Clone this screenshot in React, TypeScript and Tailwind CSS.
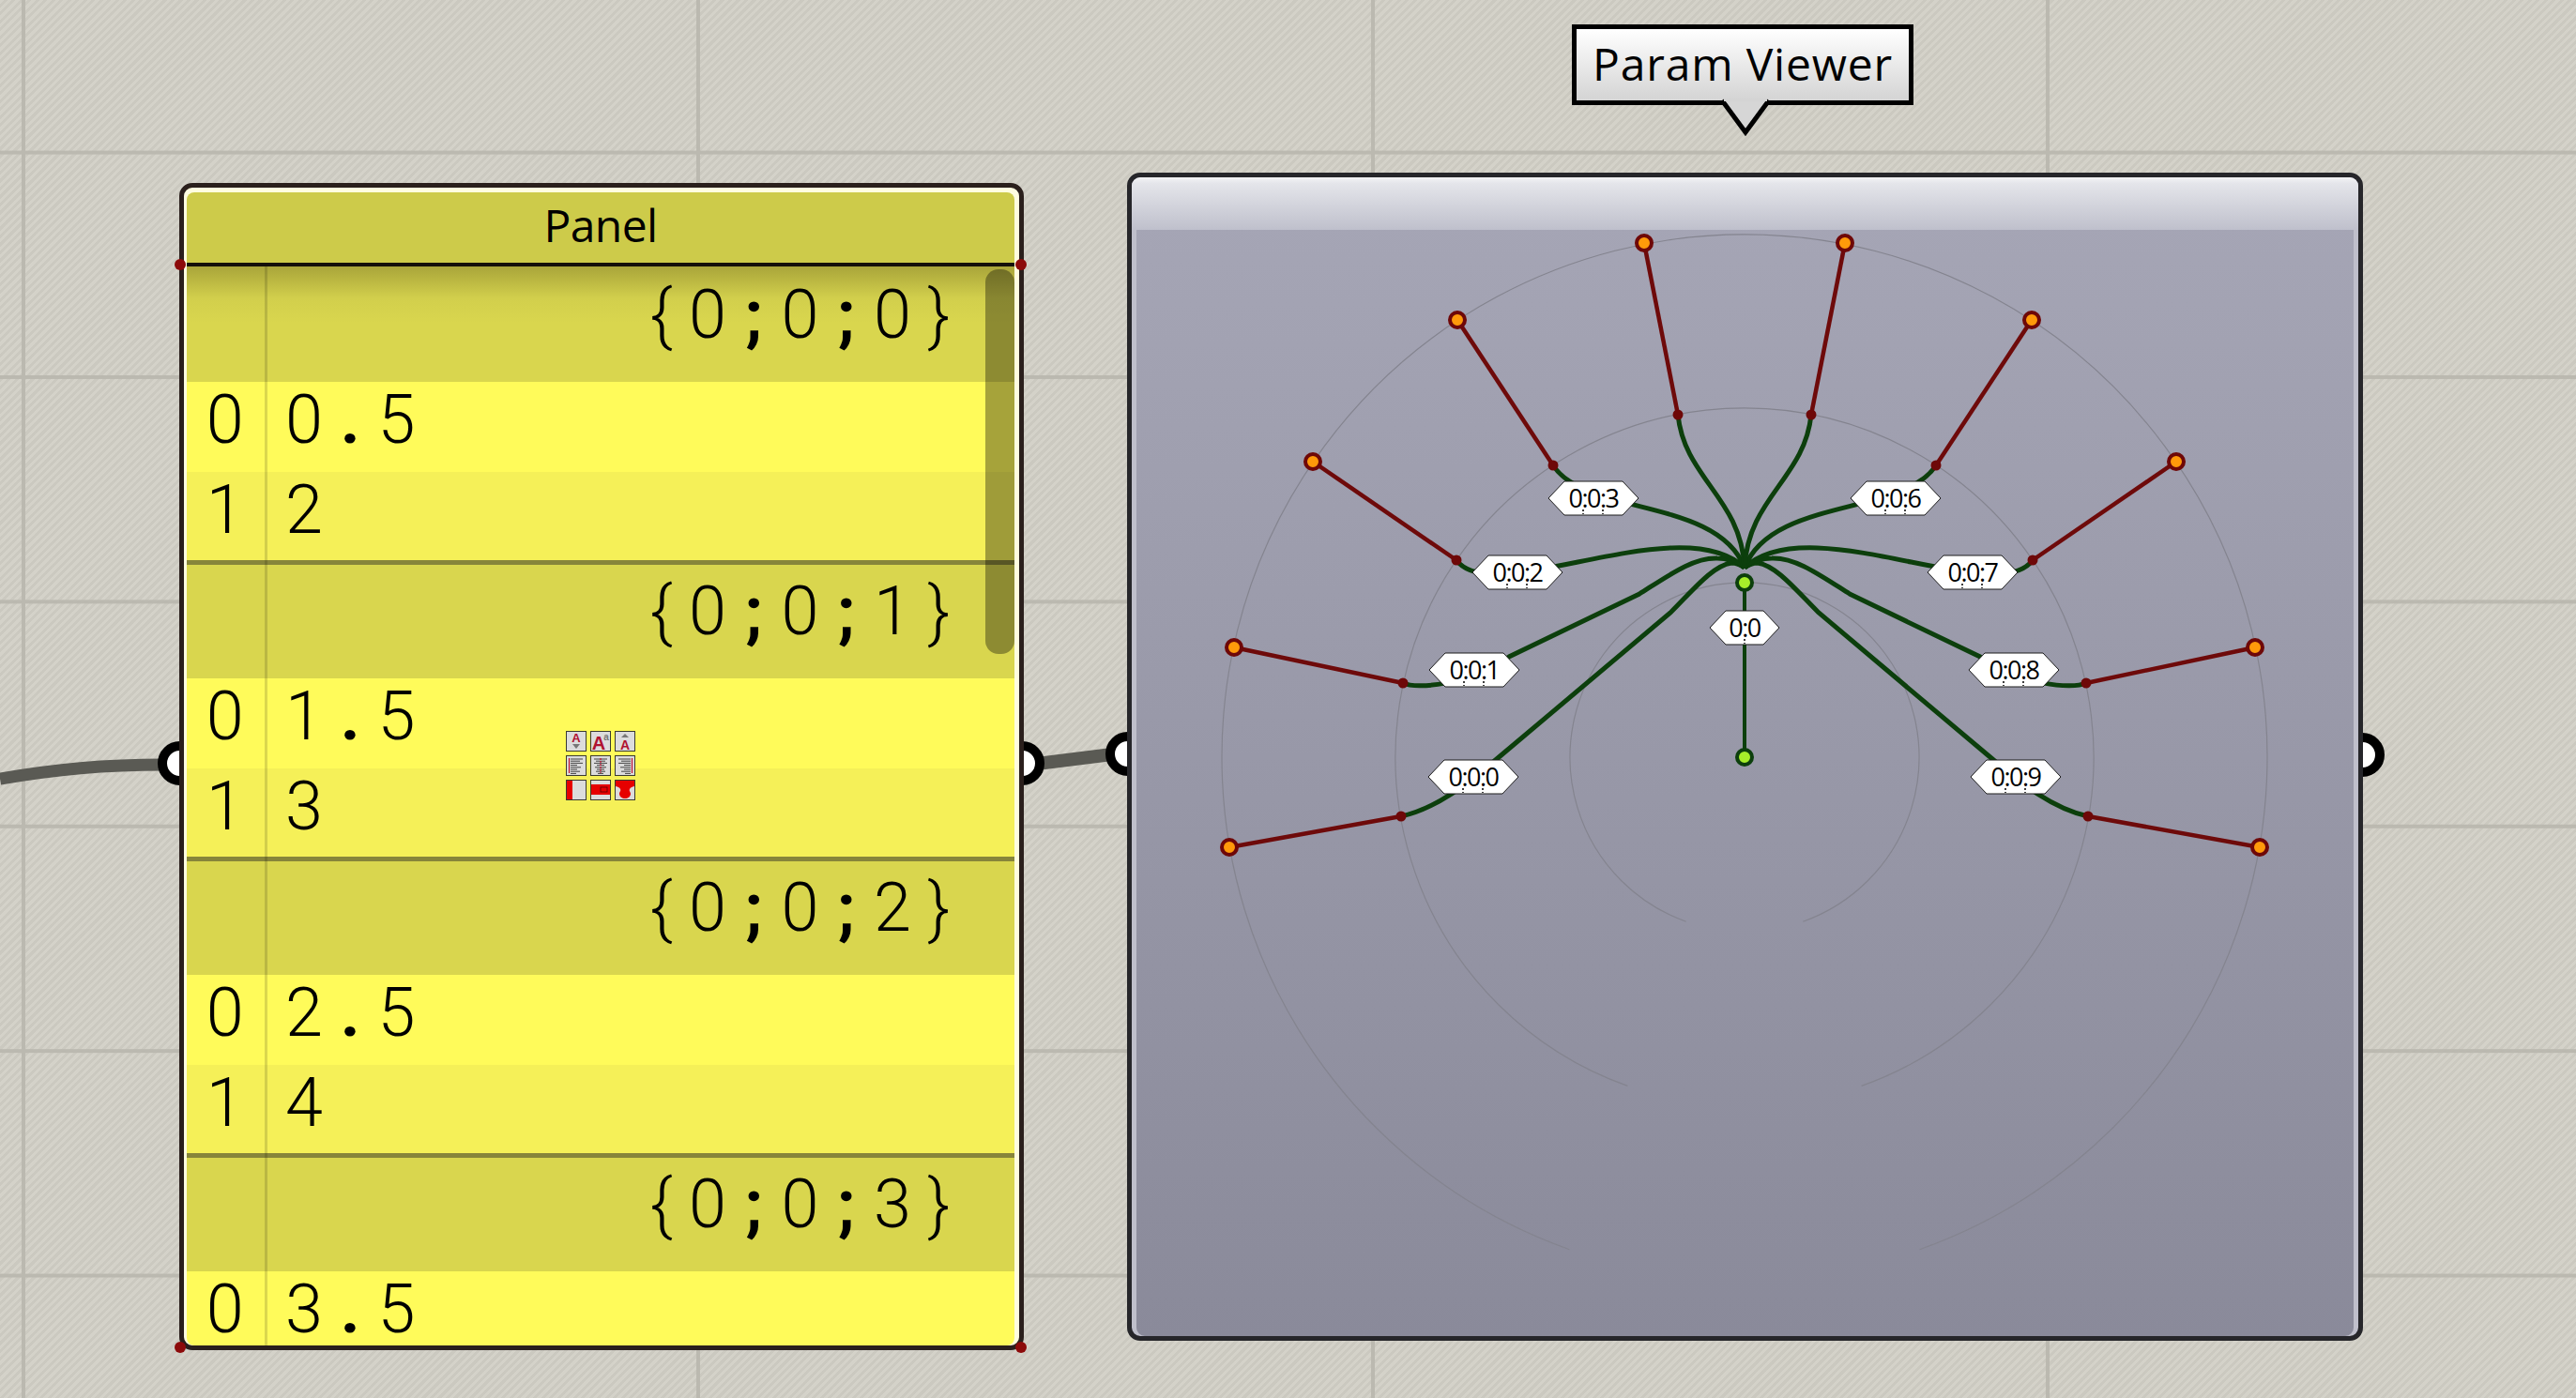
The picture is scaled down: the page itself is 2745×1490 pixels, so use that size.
import React from 'react';

const mono = "font-['Roboto',sans-serif] text-[72px] leading-none text-black";
const uiFont = "font-['Open_Sans','Noto_Sans',sans-serif]";

const treeCenter = { x: 1859, y: 807 };

// left half of the tree, the right half is mirrored around treeCenter.x
const leftBranches = [
  { tip: [1310, 903], joint: [1493, 870], curve: 'C1530 862,1565 835,1596 808L1780 653C1805 628,1825 603,1845 600C1851 600,1855 602,1859 605' },
  { tip: [1315, 690], joint: [1495, 728], curve: 'C1510 735,1565 730,1608 700L1747 633C1780 612,1805 594,1830 595C1842 595,1852 600,1859 605' },
  { tip: [1399, 492], joint: [1552, 597], curve: 'C1590 650,1790 540,1859 605' },
  { tip: [1553, 341], joint: [1655, 496], curve: 'C1690 550,1830 530,1859 605' },
  { tip: [1752, 259], joint: [1788, 442], curve: 'C1795 510,1855 530,1859 605' },
];

const tags = [
  { label: '0:0:0', x: 1570, y: 828 },
  { label: '0:0:1', x: 1571, y: 714 },
  { label: '0:0:2', x: 1617, y: 610 },
  { label: '0:0:3', x: 1698, y: 531 },
  { label: '0:0:6', x: 2020, y: 531 },
  { label: '0:0:7', x: 2102, y: 610 },
  { label: '0:0:8', x: 2146, y: 714 },
  { label: '0:0:9', x: 2148, y: 828 },
];

const rings = [186, 372, 557];

function arcPath(r: number) {
  // open at the bottom, about 20 degrees each side
  const dx = r * 0.335;
  const dy = r * 0.942;
  return `M${treeCenter.x - dx} ${treeCenter.y + dy}A${r} ${r} 0 1 1 ${treeCenter.x + dx} ${treeCenter.y + dy}`;
}

function mirror(pt: number[]) {
  return [treeCenter.x * 2 - pt[0], pt[1]];
}

function mirrorCurve(curve: string) {
  return curve.replace(/(\d+) (\d+)/g, (_, x, y) => `${treeCenter.x * 2 - Number(x)} ${y}`);
}

function Tag({ label, x, y }: { label: string; x: number; y: number }) {
  const half = label.length > 3 ? 48 : 37;
  const inset = 17;
  const ticks = label.length > 3 ? [x - 11, x + 10] : [x];
  return (
    <g>
      <polygon
        points={`${x - half},${y} ${x - half + inset},${y - 18} ${x + half - inset},${y - 18} ${x + half},${y} ${x + half - inset},${y + 18} ${x - half + inset},${y + 18}`}
        fill="#ffffff"
        stroke="#1c1c1c"
        strokeWidth="1"
      />
      <text
        x={x}
        y={y + 10}
        textAnchor="middle"
        fontFamily="Open Sans, sans-serif"
        fontSize="27"
        letterSpacing="-1.5"
        fill="#000000"
      >
        {label}
      </text>
      {ticks.map((t) => (
        <line key={t} x1={t} x2={t} y1={y + 12} y2={y + 17} stroke="#000000" strokeWidth="1.5" strokeDasharray="2 2" />
      ))}
    </g>
  );
}

function TreeDiagram() {
  return (
    <svg className="absolute left-0 top-0 z-20" width="2745" height="1490" viewBox="0 0 2745 1490">
      {rings.map((r) => (
        <path key={r} d={arcPath(r)} fill="none" stroke="#84848f" strokeWidth="1.2" />
      ))}
      <line x1="1859" y1="621" x2="1859" y2="807" stroke="#0c3f0c" strokeWidth="4" />
      {leftBranches.map((b, i) => {
        const tip2 = mirror(b.tip);
        const joint2 = mirror(b.joint);
        return (
          <g key={i}>
            <path d={`M${b.joint[0]} ${b.joint[1]}${b.curve}`} fill="none" stroke="#0c3f0c" strokeWidth="5" />
            <path d={`M${joint2[0]} ${joint2[1]}${mirrorCurve(b.curve)}`} fill="none" stroke="#0c3f0c" strokeWidth="5" />
            <line x1={b.tip[0]} y1={b.tip[1]} x2={b.joint[0]} y2={b.joint[1]} stroke="#6e0a0a" strokeWidth="4.5" />
            <line x1={tip2[0]} y1={tip2[1]} x2={joint2[0]} y2={joint2[1]} stroke="#6e0a0a" strokeWidth="4.5" />
            <circle cx={b.joint[0]} cy={b.joint[1]} r="5.5" fill="#6e0808" />
            <circle cx={joint2[0]} cy={joint2[1]} r="5.5" fill="#6e0808" />
            <circle cx={b.tip[0]} cy={b.tip[1]} r="8" fill="#ff9a0a" stroke="#6e0808" strokeWidth="4" />
            <circle cx={tip2[0]} cy={tip2[1]} r="8" fill="#ff9a0a" stroke="#6e0808" strokeWidth="4" />
          </g>
        );
      })}
      <circle cx="1859" cy="621" r="8" fill="#a6ee2a" stroke="#0c3f0c" strokeWidth="4" />
      <circle cx="1859" cy="807" r="8" fill="#a6ee2a" stroke="#0c3f0c" strokeWidth="4" />
      <Tag label="0:0" x={1859} y={669} />
      {tags.map((t) => (
        <Tag key={t.label} {...t} />
      ))}
    </svg>
  );
}

// every character gets its own cell, the panel font is fixed pitch
function MonoText({ text }: { text: string }) {
  return (
    <span className="flex">
      {text.split('').map((c, i) => (
        <span key={i} className={`w-[49.3px] text-center ${mono} ${c === ';' || c === '.' ? 'font-bold' : 'font-light'}`}>
          {c}
        </span>
      ))}
    </span>
  );
}

function PanelRow({ index, value, tone, height }: { index: string; value: string; tone: string; height: string }) {
  return (
    <div className={`flex shrink-0 ${tone} ${height}`}>
      <div className="ml-4 pt-[5px]">
        <MonoText text={index} />
      </div>
      <div className="ml-[35px] pt-[5px]">
        <MonoText text={value} />
      </div>
    </div>
  );
}

function PanelGroup({ path, first }: { path: string; first?: boolean }) {
  return (
    <div
      className={`flex shrink-0 justify-end bg-[#d9d64e] pr-[56px] ${first ? 'h-[123px] bg-[linear-gradient(#a9a53a,#d2cf4c_34px,#d9d64e_60px)] pt-4' : 'h-[126px] border-t-[5px] border-[#87853a] pt-[14px]'}`}
    >
      <MonoText text={path} />
    </div>
  );
}

function MiniIcon({ children }: { children: React.ReactNode }) {
  return (
    <svg className="overflow-visible" width="22" height="22" viewBox="0 0 22 22">
      <rect x="0.5" y="0.5" width="21" height="21" fill="#dcdcdc" stroke="#3a3a30" />
      {children}
    </svg>
  );
}

const alignLines = (xs: [number, number][]) =>
  xs.map(([a, b], i) => <line key={i} x1={a} x2={b} y1={4 + i * 2.2} y2={4 + i * 2.2} stroke="#444444" strokeWidth="1" />);

function PanelIcons() {
  const letter = { fontFamily: 'Liberation Sans, sans-serif', fontWeight: 700, fill: '#b01230', textAnchor: 'middle' as const };
  return (
    <div className="absolute left-[603px] top-[779px] z-10 grid grid-cols-[22px_22px_22px] gap-1">
      <MiniIcon>
        <text x="11" y="12" fontSize="13" {...letter}>A</text>
        <path d="M7 14h8l-4 5z" fill="#777777" />
      </MiniIcon>
      <MiniIcon>
        <text x="9" y="20" fontSize="20" {...letter}>A</text>
        <text x="17" y="10" fontSize="10" fontFamily="Liberation Sans, sans-serif" fontWeight="700" fill="#777777" textAnchor="middle">a</text>
      </MiniIcon>
      <MiniIcon>
        <path d="M11 3l4 4H7z" fill="#777777" />
        <text x="11" y="20" fontSize="14" {...letter}>A</text>
      </MiniIcon>
      <MiniIcon>
        <line x1="3.5" x2="3.5" y1="3" y2="19" stroke="#c01030" strokeWidth="1.2" />
        {alignLines([[5, 18], [5, 15], [5, 18], [5, 12], [5, 16], [5, 12], [5, 15], [5, 11]])}
      </MiniIcon>
      <MiniIcon>
        {alignLines([[4, 18], [6, 16], [4, 18], [7, 15], [5, 17], [7, 15], [6, 16], [8, 14]])}
        <line x1="11" x2="11" y1="3" y2="19" stroke="#c01030" strokeWidth="1.2" strokeDasharray="2 1" />
      </MiniIcon>
      <MiniIcon>
        {alignLines([[4, 17], [7, 17], [4, 17], [10, 17], [6, 17], [10, 17], [7, 17], [11, 17]])}
        <line x1="18.5" x2="18.5" y1="3" y2="19" stroke="#c01030" strokeWidth="1.2" />
      </MiniIcon>
      <MiniIcon>
        <rect x="1" y="1" width="6" height="20" fill="#e60000" />
      </MiniIcon>
      <MiniIcon>
        <rect x="1" y="5" width="20" height="11" fill="#e60000" />
        <rect x="11" y="8" width="7" height="5" fill="none" stroke="#5a0000" strokeWidth="0.8" />
      </MiniIcon>
      <MiniIcon>
        <path d="M1 1h20v6c-3 1-4 1-5 3-1 2 1 3 1 5 0 3-3 5-6 5s-6-2-6-5c0-2 2-3 1-5-1-2-2-2-5-3z" fill="#e60000" />
      </MiniIcon>
    </div>
  );
}

function Panel() {
  return (
    <div className="absolute left-[191px] top-[195px] z-10 flex h-[1244px] w-[900px] flex-col rounded-[14px] border-[5px] border-[#2a1f1c] bg-[#fffde0] pl-[3px] pr-[5px] pt-[5px]">
      <div className="flex h-[75px] shrink-0 items-center justify-center rounded-t-[8px] bg-[#cdcb4a] pb-[5px]">
        <span className={`${uiFont} text-[48px] leading-none tracking-[-0.6px] text-black`}>Panel</span>
      </div>
      <div className="h-1 shrink-0 bg-[#14100a]" />
      <div className="relative min-h-0 flex-1">
        <PanelGroup path="{0;0;0}" first />
        <PanelRow index="0" value="0.5" tone="bg-[#fffb5a]" height="h-[96px]" />
        <PanelRow index="1" value="2" tone="bg-[#f5f058]" height="h-[94px]" />
        <PanelGroup path="{0;0;1}" />
        <PanelRow index="0" value="1.5" tone="bg-[#fffb5a]" height="h-[96px]" />
        <PanelRow index="1" value="3" tone="bg-[#f5f058]" height="h-[94px]" />
        <PanelGroup path="{0;0;2}" />
        <PanelRow index="0" value="2.5" tone="bg-[#fffb5a]" height="h-[96px]" />
        <PanelRow index="1" value="4" tone="bg-[#f5f058]" height="h-[94px]" />
        <PanelGroup path="{0;0;3}" />
        <PanelRow index="0" value="3.5" tone="rounded-b-[8px] bg-[#fffb5a]" height="h-[79px]" />
        {/* index column divider and scroll thumb sit over the rows */}
        <div className="absolute bottom-0 left-[83px] top-0 w-[3px] bg-[#00000024]" />
        <div className="absolute left-[851px] top-[3px] h-[410px] w-[31px] rounded-[14px] bg-[#00000059]" />
      </div>
    </div>
  );
}

function ParamViewer() {
  return (
    <div className="absolute left-[1201px] top-[184px] z-10 flex h-[1245px] w-[1317px] flex-col overflow-hidden rounded-[14px] border-[5px] border-[#26262a] bg-[linear-gradient(#a6a6b6,#8a8a9a)] shadow-[inset_5px_0_0_#bfbfcb,inset_-5px_0_0_#bfbfcb]">
      <div className="h-[56px] shrink-0 bg-[linear-gradient(#f4f4f6,#e4e5ea_12%,#bfc0cc)]" />
    </div>
  );
}

function Tooltip() {
  return (
    <div className="absolute left-[1675px] top-[26px] z-20 flex h-[86px] w-[364px] items-center justify-center border-[5px] border-black bg-[linear-gradient(#ffffff,#d4d4d4)] pb-[2px]">
      <span className={`${uiFont} text-[48px] leading-none tracking-[0.8px] text-black`}>Param Viewer</span>
      <svg className="absolute left-[151px] top-[74px]" width="58" height="41" viewBox="0 0 58 41">
        <path d="M4 2L29 36L54 2" fill="#d6d6d6" stroke="#000000" strokeWidth="5" />
        <rect x="6" y="0" width="46" height="3" fill="#d4d4d4" />
      </svg>
    </div>
  );
}

function Grip({ className }: { className: string }) {
  return <div className={`absolute z-0 h-[47px] w-[47px] rounded-full border-[10px] border-black bg-white ${className}`} />;
}

export default function App() {
  return (
    <div className="relative h-[1490px] w-[2745px] overflow-hidden bg-[#d0cec6] bg-[linear-gradient(to_right,transparent_23px,#bbb9b0_23px,#bbb9b0_27px,transparent_27px),linear-gradient(to_bottom,transparent_161px,#bbb9b0_161px,#bbb9b0_165px,transparent_165px),repeating-linear-gradient(135deg,#d4d2c9_0,#d4d2c9_3px,#cbc9c0_3px,#cbc9c0_6px)] bg-[length:719px_100%,100%_239.4px,auto]">
      <svg className="absolute left-0 top-0 z-0" width="2745" height="1490" viewBox="0 0 2745 1490">
        <path d="M0 830C60 820 110 815 175 815" fill="none" stroke="#5a5a54" strokeWidth="13" />
        <path d="M1105 814L1185 804" fill="none" stroke="#5a5a54" strokeWidth="14" />
      </svg>
      <Grip className="left-[168px] top-[790px]" />
      <Grip className="left-[1066px] top-[790px]" />
      <Grip className="left-[1178px] top-[780px]" />
      <Grip className="left-[2494px] top-[781px]" />
      <Panel />
      <PanelIcons />
      <ParamViewer />
      <TreeDiagram />
      <Tooltip />
      {[
        'left-[186px] top-[276px]',
        'left-[1082px] top-[276px]',
        'left-[186px] top-[1430px]',
        'left-[1082px] top-[1430px]',
      ].map((pos) => (
        <div key={pos} className={`absolute z-20 h-3 w-3 rounded-full bg-[#8c0a0a] ${pos}`} />
      ))}
    </div>
  );
}
